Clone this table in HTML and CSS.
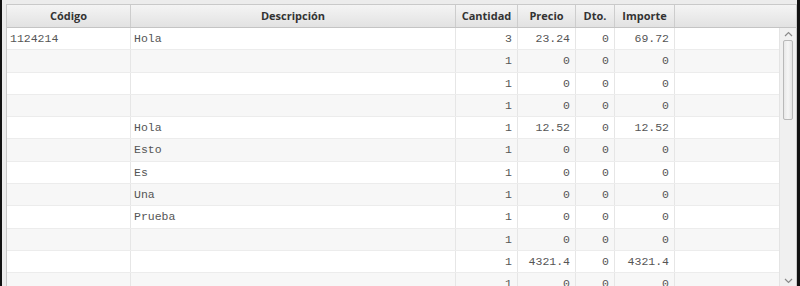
FILE: index.html
```html
<!DOCTYPE html>
<html>
<head>
<meta charset="utf-8">
<link rel="stylesheet" href="styles.css">
</head>
<body>
<div class="frame">
  <div class="table">
    <div class="head">
      <div class="hc c1">Código</div>
      <div class="hc c2">Descripción</div>
      <div class="hc c3">Cantidad</div>
      <div class="hc c4">Precio</div>
      <div class="hc c5">Dto.</div>
      <div class="hc c6">Importe</div>
      <div class="hc c7"></div>
    </div>
    <div class="bodywrap">
      <div class="rows">
        <div class="row"><div class="c c1">1124214</div><div class="c c2">Hola</div><div class="c c3 r">3</div><div class="c c4 r">23.24</div><div class="c c5 r">0</div><div class="c c6 r">69.72</div><div class="c c7"></div></div>
        <div class="row"><div class="c c1"></div><div class="c c2"></div><div class="c c3 r">1</div><div class="c c4 r">0</div><div class="c c5 r">0</div><div class="c c6 r">0</div><div class="c c7"></div></div>
        <div class="row"><div class="c c1"></div><div class="c c2"></div><div class="c c3 r">1</div><div class="c c4 r">0</div><div class="c c5 r">0</div><div class="c c6 r">0</div><div class="c c7"></div></div>
        <div class="row"><div class="c c1"></div><div class="c c2"></div><div class="c c3 r">1</div><div class="c c4 r">0</div><div class="c c5 r">0</div><div class="c c6 r">0</div><div class="c c7"></div></div>
        <div class="row"><div class="c c1"></div><div class="c c2">Hola</div><div class="c c3 r">1</div><div class="c c4 r">12.52</div><div class="c c5 r">0</div><div class="c c6 r">12.52</div><div class="c c7"></div></div>
        <div class="row"><div class="c c1"></div><div class="c c2">Esto</div><div class="c c3 r">1</div><div class="c c4 r">0</div><div class="c c5 r">0</div><div class="c c6 r">0</div><div class="c c7"></div></div>
        <div class="row"><div class="c c1"></div><div class="c c2">Es</div><div class="c c3 r">1</div><div class="c c4 r">0</div><div class="c c5 r">0</div><div class="c c6 r">0</div><div class="c c7"></div></div>
        <div class="row"><div class="c c1"></div><div class="c c2">Una</div><div class="c c3 r">1</div><div class="c c4 r">0</div><div class="c c5 r">0</div><div class="c c6 r">0</div><div class="c c7"></div></div>
        <div class="row"><div class="c c1"></div><div class="c c2">Prueba</div><div class="c c3 r">1</div><div class="c c4 r">0</div><div class="c c5 r">0</div><div class="c c6 r">0</div><div class="c c7"></div></div>
        <div class="row"><div class="c c1"></div><div class="c c2"></div><div class="c c3 r">1</div><div class="c c4 r">0</div><div class="c c5 r">0</div><div class="c c6 r">0</div><div class="c c7"></div></div>
        <div class="row"><div class="c c1"></div><div class="c c2"></div><div class="c c3 r">1</div><div class="c c4 r">4321.4</div><div class="c c5 r">0</div><div class="c c6 r">4321.4</div><div class="c c7"></div></div>
        <div class="row"><div class="c c1"></div><div class="c c2"></div><div class="c c3 r">1</div><div class="c c4 r">0</div><div class="c c5 r">0</div><div class="c c6 r">0</div><div class="c c7"></div></div>
      </div>
      <div class="scroll">
        <div class="arrow up"><svg width="9" height="6" viewBox="0 0 9 6"><path d="M1 5 L4.5 1.5 L8 5" fill="none" stroke="#8a8a8a" stroke-width="1.2"/></svg></div>
        <div class="track"><div class="thumb"></div></div>
        <div class="arrow down"><svg width="9" height="6" viewBox="0 0 9 6"><path d="M1 1 L4.5 4.5 L8 1" fill="none" stroke="#8a8a8a" stroke-width="1.2"/></svg></div>
      </div>
    </div>
  </div>
</div>
</body>
</html>
```

FILE: styles.css
```css
html, body {
  margin: 0;
  padding: 0;
  background: #111;
  width: 800px;
  height: 286px;
  overflow: hidden;
}
.frame {
  margin-left: 2px;
  width: 795px;
  height: 286px;
  background: #ececec;
  padding: 4px 0 0 4px;
  box-sizing: border-box;
}
.table {
  width: 791px;
  height: 282px;
  background: #fff;
  border: 1px solid #c9c9c9;
  border-bottom: none;
  box-sizing: border-box;
  display: flex;
  flex-direction: column;
  overflow: hidden;
}
.head {
  display: flex;
  height: 22px;
  flex: none;
  background: linear-gradient(#f4f4f4, #e2e2e2);
  border-bottom: 1px solid #c4c4c4;
}
.hc {
  box-sizing: border-box;
  border-right: 1px solid #cdcdcd;
  font-family: "Open Sans", "DejaVu Sans", sans-serif;
  font-weight: 700;
  font-size: 11px;
  color: #333;
  text-align: center;
  line-height: 22px;
  white-space: nowrap;
}
.hc.c7 { border-right: none; }
.c1 { width: 124px; }
.c2 { width: 325px; }
.c3 { width: 62px; }
.c4 { width: 58px; }
.c5 { width: 39px; }
.c6 { width: 60px; }
.c7 { flex: 1; }
.bodywrap {
  display: flex;
  flex: 1;
  min-height: 0;
}
.rows {
  flex: 1;
  overflow: hidden;
}
.row {
  display: flex;
  height: 22.3px;
  border-bottom: 1px solid #ececec;
  box-sizing: border-box;
}
.row:nth-child(even) { background: #f7f7f7; }
.c {
  box-sizing: border-box;
  border-right: 1px solid #e6e6e6;
  font-family: "Liberation Mono", "Courier New", monospace;
  font-size: 11.5px;
  color: #555;
  line-height: 21px;
  padding: 0 3px;
  white-space: nowrap;
}
.c.c7 { border-right: none; }
.c.r { text-align: right; padding-right: 5px; }
.scroll {
  width: 16px;
  flex: none;
  background: #f0f0f0;
  border-left: 1px solid #e4e4e4;
  display: flex;
  flex-direction: column;
  align-items: center;
}
.arrow {
  height: 11px;
  display: flex;
  align-items: center;
  justify-content: center;
  flex: none;
}
.track {
  flex: 1;
  width: 100%;
  display: flex;
  justify-content: center;
}
.thumb {
  width: 10px;
  height: 80px;
  margin-top: 1px;
  background: linear-gradient(90deg, #e8e8e8, #f6f6f6 50%, #e4e4e4);
  border: 1px solid #b9b9b9;
  border-radius: 2px;
  box-sizing: border-box;
}
```
